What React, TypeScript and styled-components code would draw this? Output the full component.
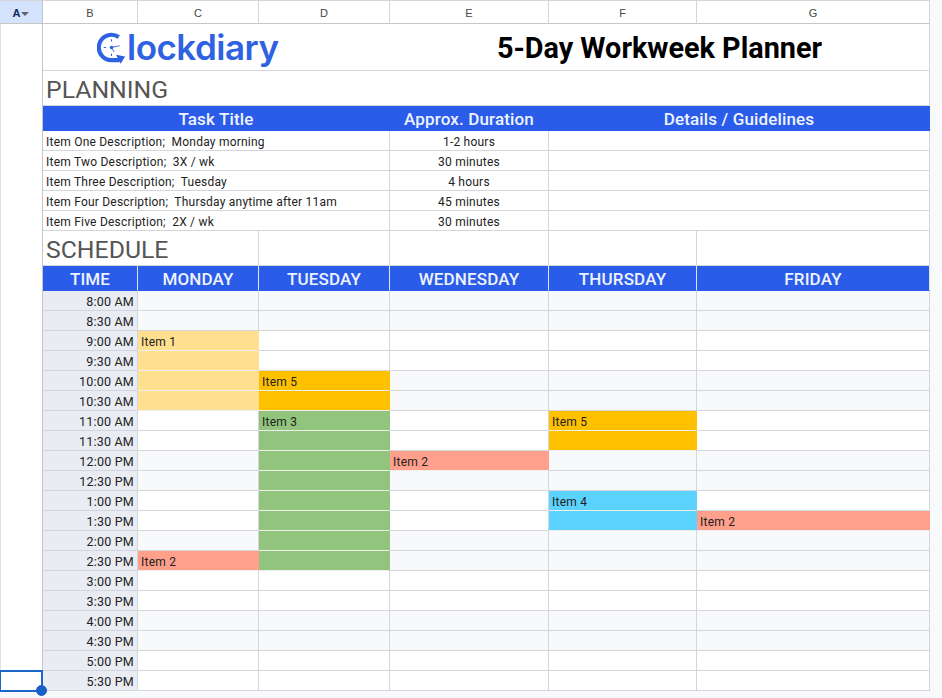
import React from 'react';
import styled, { createGlobalStyle } from 'styled-components';

const GlobalStyle = createGlobalStyle`
  html, body {
    margin: 0;
    padding: 0;
    background: #f8f9fa;
    overflow: hidden;
  }
`;

const Sheet = styled.div`
  position: relative;
  width: 942px;
  height: 698px;
  overflow: hidden;
  font-family: Roboto, "Liberation Sans", sans-serif;
`;

const Grid = styled.div`
  display: grid;
  grid-template-columns: 43px 95px 121px 131px 159px 148px 233px;
  grid-template-rows: 24px 47px 35px 25px repeat(5, 20px) 35px 25px repeat(20, 20px);
  width: 930px;
`;

const Cell = styled.div<{ $span?: number; $bg?: string; $align?: string }>`
  grid-column: span ${(p) => p.$span ?? 1};
  box-sizing: border-box;
  display: flex;
  align-items: center;
  justify-content: ${(p) => p.$align ?? 'flex-start'};
  min-width: 0;
  padding-top: 1px;
  border-right: 1px solid #d4d6d9;
  border-bottom: 1px solid #d4d6d9;
  background: ${(p) => p.$bg ?? '#fff'};
  white-space: pre;
`;

const ColumnHead = styled(Cell)<{ $selected?: boolean }>`
  justify-content: center;
  gap: 1px;
  background: ${(p) => (p.$selected ? '#d3e3fd' : '#fff')};
  border-top: 1px solid #d4d6d9;
  border-right-color: ${(p) => (p.$selected ? '#c4c7c5' : '#d4d6d9')};
  border-bottom: 1px solid #c4c7c5;
  color: ${(p) => (p.$selected ? '#0b2a5c' : '#444746')};
  font: ${(p) => (p.$selected ? 700 : 400)} 11px "Liberation Sans", sans-serif;
`;

const Caret = styled.span`
  width: 0;
  height: 0;
  margin-top: 2px;
  border-left: 4px solid transparent;
  border-right: 4px solid transparent;
  border-top: 4px solid #5f6368;
`;

const RowGutter = styled.div`
  position: relative;
  box-sizing: border-box;
  border-right: 1px solid #c4c7c5;
  background: #fff;

  &::before {
    content: '';
    position: absolute;
    left: 0;
    right: 41px;
    top: 0;
    bottom: 0;
    border-left: 1px solid #dfe1e4;
    border-bottom: 1px solid #d4d6d9;
  }
`;

const LogoCell = styled(Cell)`
  padding-left: 54px;
  border-right: none;
`;

const LogoMark = styled.svg`
  flex: none;
  width: 29px;
  height: 33px;
`;

const LogoWord = styled.span`
  margin-left: 1px;
  color: #2f62e2;
  font: 600 35px/1 Inter, Roboto, sans-serif;
  letter-spacing: -0.5px;
`;

const PageTitle = styled(Cell)`
  color: #000;
  font-size: 28.8px;
  font-weight: 700;
`;

const SectionTitle = styled(Cell)`
  padding: 3px 0 0 3px;
  color: #555;
  font-size: 24.8px;
`;

const HeadCell = styled(Cell)`
  justify-content: center;
  background: #2b5ce9;
  border-color: #2b5ce9;
  color: #eef3ff;
  font-size: 17px;
  font-weight: 500;
  letter-spacing: 0.15px;
`;

const WeekHead = styled(HeadCell)`
  border-right-color: #dfe6fb;
`;

const BodyCell = styled(Cell)`
  padding: 2px 3px 0;
  color: #222;
  font-size: 12px;
  letter-spacing: 0.22px;
`;

const TimeCell = styled(BodyCell)`
  padding-top: 1px;
  justify-content: flex-end;
  background: #e9ecf2;
  font-size: 12.5px;
`;

const EventCell = styled(BodyCell)<{ $color?: string }>`
  background: ${(p) => p.$color ?? p.$bg ?? '#fff'};
  border-bottom-color: ${(p) => (p.$color ? '#eeeeee' : '#d4d6d9')};
  border-right-color: ${(p) => p.$color ?? '#d4d6d9'};
`;

const Selection = styled.div`
  position: absolute;
  left: 0;
  top: 670px;
  width: 43px;
  height: 22px;
  box-sizing: border-box;
  border: 2px solid #1a66c9;
  border-left-width: 1px;
`;

const Handle = styled.div`
  position: absolute;
  right: -6px;
  bottom: -6px;
  width: 9px;
  height: 9px;
  border-radius: 50%;
  background: #1a5fc8;
  border: 1px solid #1a5fc8;
`;

const YELLOW = '#ffe091';
const AMBER = '#ffc000';
const GREEN = '#93c47d';
const SALMON = '#ffa08c';
const CYAN = '#5cd3ff';

const columns = ['B', 'C', 'D', 'E', 'F', 'G'];

const tasks = [
  ['Item One Description;  Monday morning', '1-2 hours'],
  ['Item Two Description;  3X / wk', '30 minutes'],
  ['Item Three Description;  Tuesday', '4 hours'],
  ['Item Four Description;  Thursday anytime after 11am', '45 minutes'],
  ['Item Five Description;  2X / wk', '30 minutes'],
];

const days = ['MONDAY', 'TUESDAY', 'WEDNESDAY', 'THURSDAY', 'FRIDAY'];

const times = [
  '8:00 AM', '8:30 AM', '9:00 AM', '9:30 AM', '10:00 AM', '10:30 AM', '11:00 AM', '11:30 AM',
  '12:00 PM', '12:30 PM', '1:00 PM', '1:30 PM', '2:00 PM', '2:30 PM', '3:00 PM', '3:30 PM',
  '4:00 PM', '4:30 PM', '5:00 PM', '5:30 PM',
];

// day index, first row, number of rows
const events = [
  { day: 0, start: 2, rows: 4, label: 'Item 1', color: YELLOW },
  { day: 0, start: 13, rows: 1, label: 'Item 2', color: SALMON },
  { day: 1, start: 4, rows: 2, label: 'Item 5', color: AMBER },
  { day: 1, start: 6, rows: 8, label: 'Item 3', color: GREEN },
  { day: 2, start: 8, rows: 1, label: 'Item 2', color: SALMON },
  { day: 3, start: 6, rows: 2, label: 'Item 5', color: AMBER },
  { day: 3, start: 10, rows: 2, label: 'Item 4', color: CYAN },
  { day: 4, start: 11, rows: 1, label: 'Item 2', color: SALMON },
];

const findEvent = (day: number, row: number) =>
  events.find((e) => e.day === day && row >= e.start && row < e.start + e.rows);

const Logo: React.FC = () => (
  <>
    <LogoMark viewBox="0 0 32 36">
      <path
        d="M24 6.5 A14 14 0 1 0 16 32 L25 32"
        fill="none"
        stroke="#2f62e2"
        strokeWidth="4.6"
      />
      <path d="M21 26 L31 28 L26 36 Z" fill="#2f62e2" />
      <circle cx="16" cy="18" r="2" fill="#2f62e2" />
      <path d="M16 18 L25 16 M16 18 L19 23" stroke="#2f62e2" strokeWidth="1" fill="none" />
      <path d="M16 9 V11.5 M7.5 18 H10 M16 25 V27.5" stroke="#2f62e2" strokeWidth="1.2" fill="none" />
    </LogoMark>
    <LogoWord>lockdiary</LogoWord>
  </>
);

const App: React.FC = () => {
  return (
    <Sheet>
      <GlobalStyle />
      <Grid>
        <ColumnHead $selected>
          A<Caret />
        </ColumnHead>
        {columns.map((c) => (
          <ColumnHead key={c}>{c}</ColumnHead>
        ))}

        <RowGutter />
        <LogoCell $span={3}>
          <Logo />
        </LogoCell>
        <PageTitle $span={3} $align="center">5-Day Workweek Planner</PageTitle>

        <RowGutter />
        <SectionTitle $span={6}>PLANNING</SectionTitle>

        <RowGutter />
        <HeadCell $span={3}>Task Title</HeadCell>
        <HeadCell>Approx. Duration</HeadCell>
        <HeadCell $span={2}>Details / Guidelines</HeadCell>

        {tasks.map(([title, duration]) => (
          <React.Fragment key={title}>
            <RowGutter />
            <BodyCell $span={3}>{title}</BodyCell>
            <BodyCell $align="center">{duration}</BodyCell>
            <BodyCell $span={2} />
          </React.Fragment>
        ))}

        <RowGutter />
        <SectionTitle $span={2}>SCHEDULE</SectionTitle>
        <Cell />
        <Cell />
        <Cell />
        <Cell />

        <RowGutter />
        <WeekHead>TIME</WeekHead>
        {days.map((d) => (
          <WeekHead key={d}>{d}</WeekHead>
        ))}

        {times.map((time, row) => {
          const shaded = Math.floor(row / 2) % 2 === 0;
          return (
            <React.Fragment key={time}>
              <RowGutter />
              <TimeCell>{time}</TimeCell>
              {days.map((d, day) => {
                const ev = findEvent(day, row);
                return (
                  <EventCell key={d} $color={ev?.color} $bg={shaded ? '#f8f9fb' : undefined}>
                    {ev && ev.start === row ? ev.label : null}
                  </EventCell>
                );
              })}
            </React.Fragment>
          );
        })}
      </Grid>
      <Selection>
        <Handle />
      </Selection>
    </Sheet>
  );
};

export default App;
